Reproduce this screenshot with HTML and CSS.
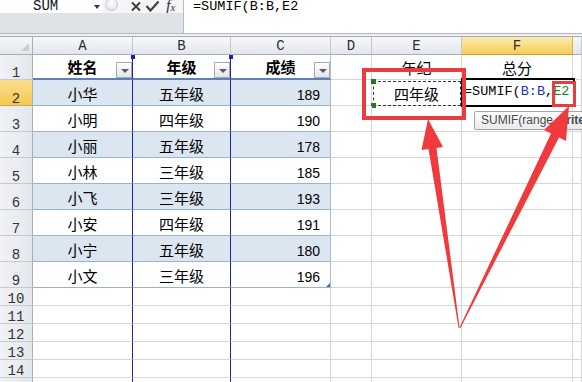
FILE: index.html
```html
<!DOCTYPE html>
<html lang="zh-CN">
<head>
    <meta charset="UTF-8">
    <title>SUMIF - 成绩表</title>
    <link rel="stylesheet" href="styles.css">
</head>
<body>
    <div class="excel">
        <!-- Formula bar -->
        <div class="formula-bar">
            <div class="fb-tools">
                <div class="fb-top">
                    <div class="name-box">
                        <span class="name-text">SUM</span>
                        <span class="caret"></span>
                    </div>
                    <div class="fb-buttons">
                        <span class="knob"></span>
                        <svg class="icon-x" width="12" height="11" viewBox="0 0 12 11">
                            <path d="M2 1.5 L10 9.5 M10 1.5 L2 9.5" stroke="#3f3f3f" stroke-width="2" fill="none"/>
                        </svg>
                        <svg class="icon-ok" width="15" height="11" viewBox="0 0 15 11">
                            <path d="M1.5 5 L5.5 9.5 L13.5 0.5" stroke="#3f3f3f" stroke-width="2.2" fill="none"/>
                        </svg>
                        <span class="fx">f<span class="fx-sub">x</span></span>
                    </div>
                </div>
            </div>
            <div class="fb-input">=SUMIF(B:B,E2</div>
        </div>
        <div class="bar-sep"></div>

        <!-- Sheet -->
        <div class="sheet">
            <div class="row h18">
                <div class="corner"></div>
                <div class="ch">A</div>
                <div class="ch">B</div>
                <div class="ch">C</div>
                <div class="ch">D</div>
                <div class="ch">E</div>
                <div class="ch on">F</div>
                <div class="ch"></div>
            </div>

            <div class="row h25 thead">
                <div class="rh">1</div>
                <div class="c tc pb pb-top">姓名<span class="filter"></span></div>
                <div class="c tc pb pb-top">年级<span class="filter"></span></div>
                <div class="c tc">成绩<span class="filter"></span></div>
                <div class="c"></div>
                <div class="c plain">年纪</div>
                <div class="c plain">总分</div>
                <div class="c"></div>
            </div>

            <div class="row h26 band">
                <div class="rh on">2</div>
                <div class="c tc pb">小华</div>
                <div class="c tc pb">五年级</div>
                <div class="c tc num">189</div>
                <div class="c"></div>
                <div class="c plain">
                    <span class="copy-ants"><i class="dot dot-top"></i><i class="dot dot-bottom"></i></span>
                    四年级
                </div>
                <div class="c">
                    <div class="edit-box">=SUMIF(<span class="ref-b">B:B</span>,<span class="ref-e">E2</span></div>
                </div>
                <div class="c"></div>
            </div>

            <div class="row h26">
                <div class="rh">3</div>
                <div class="c tc pb">小明</div>
                <div class="c tc pb">四年级</div>
                <div class="c tc num">190</div>
                <div class="c"></div><div class="c"></div><div class="c"></div><div class="c"></div>
            </div>

            <div class="row h26 band">
                <div class="rh">4</div>
                <div class="c tc pb">小丽</div>
                <div class="c tc pb">五年级</div>
                <div class="c tc num">178</div>
                <div class="c"></div><div class="c"></div><div class="c"></div><div class="c"></div>
            </div>

            <div class="row h26">
                <div class="rh">5</div>
                <div class="c tc pb">小林</div>
                <div class="c tc pb">三年级</div>
                <div class="c tc num">185</div>
                <div class="c"></div><div class="c"></div><div class="c"></div><div class="c"></div>
            </div>

            <div class="row h26 band">
                <div class="rh">6</div>
                <div class="c tc pb">小飞</div>
                <div class="c tc pb">三年级</div>
                <div class="c tc num">193</div>
                <div class="c"></div><div class="c"></div><div class="c"></div><div class="c"></div>
            </div>

            <div class="row h26">
                <div class="rh">7</div>
                <div class="c tc pb">小安</div>
                <div class="c tc pb">四年级</div>
                <div class="c tc num">191</div>
                <div class="c"></div><div class="c"></div><div class="c"></div><div class="c"></div>
            </div>

            <div class="row h26 band">
                <div class="rh">8</div>
                <div class="c tc pb">小宁</div>
                <div class="c tc pb">五年级</div>
                <div class="c tc num">180</div>
                <div class="c"></div><div class="c"></div><div class="c"></div><div class="c"></div>
            </div>

            <div class="row h26">
                <div class="rh">9</div>
                <div class="c tc pb">小文</div>
                <div class="c tc pb">三年级</div>
                <div class="c tc num">196<span class="resize"></span></div>
                <div class="c"></div><div class="c"></div><div class="c"></div><div class="c"></div>
            </div>

            <div class="row h18">
                <div class="rh">10</div>
                <div class="c pb"></div><div class="c pb"></div><div class="c"></div>
                <div class="c"></div><div class="c"></div><div class="c"></div><div class="c"></div>
            </div>
            <div class="row h18">
                <div class="rh">11</div>
                <div class="c pb"></div><div class="c pb"></div><div class="c"></div>
                <div class="c"></div><div class="c"></div><div class="c"></div><div class="c"></div>
            </div>
            <div class="row h18">
                <div class="rh">12</div>
                <div class="c pb"></div><div class="c pb"></div><div class="c"></div>
                <div class="c"></div><div class="c"></div><div class="c"></div><div class="c"></div>
            </div>
            <div class="row h18">
                <div class="rh">13</div>
                <div class="c pb"></div><div class="c pb"></div><div class="c"></div>
                <div class="c"></div><div class="c"></div><div class="c"></div><div class="c"></div>
            </div>
            <div class="row h18">
                <div class="rh">14</div>
                <div class="c pb"></div><div class="c pb"></div><div class="c"></div>
                <div class="c"></div><div class="c"></div><div class="c"></div><div class="c"></div>
            </div>
            <div class="row h18">
                <div class="rh"></div>
                <div class="c pb"></div><div class="c pb"></div><div class="c"></div>
                <div class="c"></div><div class="c"></div><div class="c"></div><div class="c"></div>
            </div>
        </div>

        <!-- Function tooltip -->
        <div class="tip">SUMIF(range, <b>criteria</b>, [sum_range])</div>

        <!-- Annotation marks -->
        <svg class="marks" width="582" height="382" viewBox="0 0 582 382">
            <rect x="364" y="70" width="100" height="48" fill="none" stroke="#ea3b3f" stroke-width="4"/>
            <rect x="553.5" y="82.5" width="21" height="23" fill="none" stroke="#ea3b3f" stroke-width="3"/>
            <polygon fill="#f03a3c" points="428,119 443,147 436.5,148 459.6,328 458.6,328 428.5,149 421.5,150"/>
            <polygon fill="#f03a3c" points="569,106 566,141 559,137.5 460.5,328 459.5,327.5 551,133.5 544,130"/>
        </svg>
    </div>
</body>
</html>
```

FILE: styles.css
```css
/* Base */
* {
    margin: 0;
    padding: 0;
    box-sizing: border-box;
}

body {
    background: #fff;
    font-family: "Noto Sans CJK SC", sans-serif;
    color: #000;
}

.excel {
    position: relative;
    width: 582px;
    height: 382px;
    overflow: hidden;
}

/* Formula bar */
.formula-bar {
    display: flex;
    height: 33px;
}

.fb-tools {
    width: 184px;
    background: #dfe3e8;
    border-right: 1px solid #b7bcc4;
}

.fb-top {
    display: flex;
    height: 13px;
    background: #fff;
    overflow: hidden;
}

.name-box {
    width: 103px;
    display: flex;
    align-items: center;
    justify-content: space-between;
    padding: 0 3px 0 33px;
    font: 14px/13px "Liberation Mono", monospace;
    color: #111;
}

.caret {
    width: 0;
    height: 0;
    border-left: 3.5px solid transparent;
    border-right: 3.5px solid transparent;
    border-top: 4px solid #333;
}

.fb-buttons {
    display: flex;
    align-items: center;
    flex: 1;
    background: #f4f5f7;
}

.knob {
    width: 13px;
    height: 13px;
    margin: -4px 0 0 2px;
    border-radius: 50%;
    border: 1px solid #c3c8cf;
    background: radial-gradient(circle at 50% 35%, #fff 0%, #e1e4e9 80%);
}

.icon-x {
    margin: 0 0 0 12px;
}

.icon-ok {
    margin: 0 0 0 3px;
}

.fx {
    margin-left: 6px;
    font: italic 16px/13px "Liberation Serif", serif;
    color: #333;
}

.fx-sub {
    font-size: 11px;
}

.fb-input {
    flex: 1;
    padding: 0 0 0 9px;
    font: 13.5px/14px "Liberation Mono", monospace;
    color: #000;
}

.bar-sep {
    height: 4px;
    border-top: 1px solid #b3b8bf;
    border-bottom: 1px solid #a7adb5;
    background: #eef0f3;
}

/* Sheet grid */
.row {
    display: grid;
    grid-template-columns: 33px 100px 98px 100px 41px 90px 111px 1fr;
}

.h18 { height: 18px; }
.h25 { height: 25px; }
.h26 { height: 26px; }

.corner {
    position: relative;
    background: linear-gradient(#f5f6f8, #e3e7ec);
    border-right: 1px solid #a8afb8;
    border-bottom: 1px solid #a8afb8;
}

.corner::after {
    content: "";
    position: absolute;
    right: 3px;
    bottom: 3px;
    border-left: 8px solid transparent;
    border-bottom: 8px solid #c9ced5;
}

.ch {
    display: flex;
    align-items: center;
    justify-content: center;
    background: linear-gradient(#f7f8fa, #e2e6eb);
    border-right: 1px solid #c2c7cf;
    border-bottom: 1px solid #a8afb8;
    font: 14px/16px "Liberation Mono", monospace;
    color: #2c2c2c;
}

.ch.on {
    background: linear-gradient(#fcecb0, #f7cd55);
    border-right-color: #d9b04a;
    border-bottom-color: #c99a2e;
}

.rh {
    display: flex;
    align-items: flex-end;
    justify-content: center;
    background: linear-gradient(90deg, #f0f2f5, #e4e8ed);
    border-right: 1px solid #a8afb8;
    border-bottom: 1px solid #c6cbd2;
    font: 14px/8px "Liberation Mono", monospace;
    color: #333;
    padding-bottom: 2px;
}

.rh.on {
    background: linear-gradient(#fbe08e, #f6c651);
    border-bottom-color: #d9a93a;
}

.c {
    position: relative;
    display: flex;
    align-items: flex-end;
    justify-content: center;
    border-right: 1px solid #d6d6d6;
    border-bottom: 1px solid #d6d6d6;
    font-size: 15px;
    line-height: 18px;
    padding-bottom: 2px;
}

/* Table styling */
.tc {
    border-bottom-color: #95b3d7;
}

.thead .tc {
    font-weight: 700;
    border-bottom: 2px solid #5b82bb;
}

.band .tc {
    background: #dce6f1;
}

.row .tc:nth-child(4) {
    border-right-color: #a7bcd8;
}

.pb {
    border-right-color: #22229a;
}

.pb-top::after {
    content: "";
    position: absolute;
    right: -3px;
    top: 0;
    width: 4px;
    height: 4px;
    background: #1a1ad6;
}

.num {
    justify-content: flex-end;
    padding-right: 10px;
    font: 14px/16px "Liberation Sans", sans-serif;
}

.filter {
    position: absolute;
    right: 0;
    bottom: 0;
    width: 16px;
    height: 16px;
    border: 1px solid #a6acb4;
    background: linear-gradient(#fff, #e3e6ea);
}

.filter::after {
    content: "";
    position: absolute;
    left: 3.5px;
    top: 6px;
    border-left: 4px solid transparent;
    border-right: 4px solid transparent;
    border-top: 4px solid #5c5c5c;
}

.resize {
    position: absolute;
    right: 0;
    bottom: 0;
    border-left: 4px solid transparent;
    border-bottom: 4px solid #4a6fa8;
}

/* Copy marquee on E2 */
.copy-ants {
    position: absolute;
    left: 1px;
    top: 1px;
    right: 0;
    bottom: -1px;
    border: 1px dashed #333;
}

.dot {
    position: absolute;
    left: -3px;
    width: 5px;
    height: 5px;
    background: #217a21;
}

.dot-top { top: -3px; }
.dot-bottom { bottom: -3px; }

/* Active edit cell F2 */
.edit-box {
    position: absolute;
    left: -1px;
    top: -2px;
    right: -3px;
    bottom: -2px;
    border: 2px solid #000;
    background: #fff;
    padding: 3px 0 0 1px;
    font: 13.5px/18px "Liberation Mono", monospace;
    white-space: nowrap;
    z-index: 2;
}

.ref-b { color: #2233b8; }
.ref-e { color: #1d7a1d; }

/* Tooltip */
.tip {
    position: absolute;
    left: 474px;
    top: 111px;
    height: 19px;
    padding: 0 6px;
    border: 1px solid #a3a7ad;
    border-radius: 2px;
    background: linear-gradient(#fdfdfd, #e9eaee);
    font: 12px/17px "Liberation Sans", sans-serif;
    color: #4a4a4a;
    white-space: nowrap;
    z-index: 3;
}

.marks {
    position: absolute;
    left: 0;
    top: 0;
    pointer-events: none;
    z-index: 4;
}
```
